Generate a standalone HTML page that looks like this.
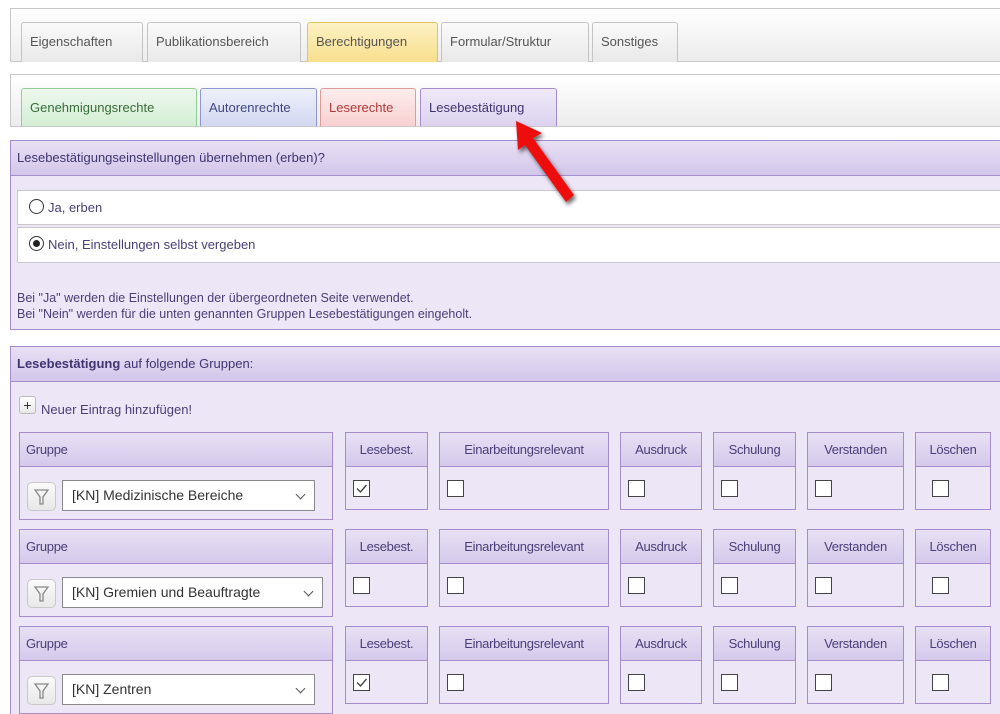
<!DOCTYPE html>
<html><head><meta charset="utf-8"><style>
*{box-sizing:border-box;margin:0;padding:0}
html,body{width:1000px;height:714px;overflow:hidden}
body{background:#fff;font-family:"Liberation Sans",Arial,sans-serif;font-size:13px;color:#4a3f78;position:relative}
.a{position:absolute}
.bar{position:absolute;left:10px;width:1000px;border:1px solid #c8c8c8;border-right:none;background:linear-gradient(#fff,#ececec)}
.tab{position:absolute;border:1px solid #c4c4c4;border-bottom:none;border-radius:3px 3px 0 0;background:linear-gradient(#fafafa,#e9e9e9);color:#555;font-size:13px;text-align:left;padding-left:8px;line-height:38px;white-space:nowrap}
.ph{position:absolute;left:10px;width:1000px;height:36px;border:1px solid #a48ccd;border-right:none;background:linear-gradient(#e8e0f4,#d3c6ea);line-height:34px;padding-left:6px;color:#3f3570}
.pb{position:absolute;left:10px;width:1000px;border:1px solid #a48ccd;border-top:none;border-right:none;background:#ede6f6}
.cell{position:absolute;border:1px solid #a48ccd;background:#ede6f6}
.ch{height:34px;border-bottom:1px solid #a48ccd;background:linear-gradient(#e8e0f4,#d5c9eb);line-height:33px;text-align:center;color:#4a3f78;font-size:13px;letter-spacing:-0.3px;white-space:nowrap}
.cb{position:absolute;width:17px;height:17px;border:1.5px solid #444;background:#fff}
.cb svg{position:absolute;left:1px;top:1px}
.flt{position:absolute;width:29px;height:29px;border:1px solid #c8c8c8;border-radius:5px;background:linear-gradient(#fafafa,#e8e8e8)}
.sel{position:absolute;height:31px;border:1px solid #8a8a8a;background:#fff;font-size:14px;color:#333;line-height:29px;padding-left:9px;white-space:nowrap}
.sel:after{content:"";position:absolute;right:10px;top:10px;width:6px;height:6px;border-right:1.2px solid #555;border-bottom:1.2px solid #555;transform:rotate(45deg)}
</style></head><body>

<div class="bar" style="top:8px;height:54px"></div>
<div class="tab" style="left:21px;top:22px;width:122px;height:40px">Eigenschaften</div>
<div class="tab" style="left:147px;top:22px;width:154px;height:40px">Publikationsbereich</div>
<div class="tab" style="left:307px;top:22px;width:131px;height:40px;background:linear-gradient(#fdf1c4,#f8df8c);border-color:#e2c45a">Berechtigungen</div>
<div class="tab" style="left:441px;top:22px;width:148px;height:40px">Formular/Struktur</div>
<div class="tab" style="left:592px;top:22px;width:86px;height:40px">Sonstiges</div>

<div class="bar" style="top:74px;height:53px"></div>
<div class="tab" style="left:21px;top:88px;width:176px;height:38px;background:linear-gradient(#eef8ee,#d3eed3);border-color:#8fcf8f;color:#3a6b3a">Genehmigungsrechte</div>
<div class="tab" style="left:200px;top:88px;width:117px;height:38px;background:linear-gradient(#eef0fb,#d3d8f1);border-color:#8e97cf;color:#3f4780">Autorenrechte</div>
<div class="tab" style="left:320px;top:88px;width:96px;height:38px;background:linear-gradient(#fdeded,#f8d0d0);border-color:#e09a9a;color:#b03a3a">Leserechte</div>
<div class="tab" style="left:420px;top:88px;width:137px;height:38px;background:linear-gradient(#efe9f8,#dcd2ef);border-color:#a48ccd;color:#3f3570">Lesebestätigung</div>

<div class="ph" style="top:140px">Lesebestätigungseinstellungen übernehmen (erben)?</div>
<div class="pb" style="top:176px;height:154px"></div>
<div class="a" style="left:17px;top:190px;width:990px;height:35px;background:#fff;border:1px solid #c8c8c8;line-height:33px;padding-left:30px;color:#4a3f78">Ja, erben</div>
<div class="a" style="left:29px;top:199px;width:15px;height:15px;border:1.3px solid #333;border-radius:50%;background:#fff"></div>
<div class="a" style="left:17px;top:227px;width:990px;height:36px;background:#fff;border:1px solid #c8c8c8;line-height:34px;padding-left:30px;color:#4a3f78">Nein, Einstellungen selbst vergeben</div>
<div class="a" style="left:29px;top:236px;width:15px;height:15px;border:1.3px solid #333;border-radius:50%;background:#fff"><div style="position:absolute;left:2.5px;top:2.5px;width:7.5px;height:7.5px;border-radius:50%;background:#222"></div></div>
<div class="a" style="left:17px;top:290px;font-size:12.5px;line-height:16px;color:#4a3f78">Bei "Ja" werden die Einstellungen der übergeordneten Seite verwendet.<br>Bei "Nein" werden für die unten genannten Gruppen Lesebestätigungen eingeholt.</div>

<div class="ph" style="top:346px"><b>Lesebestätigung</b> auf folgende Gruppen:</div>
<div class="pb" style="top:382px;height:340px"></div>
<div class="a" style="left:19px;top:396px;width:17px;height:18px;border:1px solid #bbb;border-radius:3px;background:linear-gradient(#fff,#e8e8e8);text-align:center;line-height:16px;color:#333;font-size:14px">+</div>
<div class="a" style="left:41px;top:402px;color:#4a3f78">Neuer Eintrag hinzufügen!</div>

<svg class="a" style="left:0;top:0" width="1000" height="714">
<defs><filter id="s"><feDropShadow dx="2" dy="3" stdDeviation="2" flood-color="#000" flood-opacity="0.6"/></filter></defs>
<polygon filter="url(#s)" fill="#ee1111" points="516,121 542,133 533,138 574,195 566,202 525,145 518,150"/>
</svg>

<div id="rows"></div>
<script>
var rows=[[432,"[KN] Medizinische Bereiche",true,315],[529,"[KN] Gremien und Beauftragte",false,323],[626,"[KN] Zentren",true,315]];
var cols=[[345,83,"Lesebest."],[439,170,"Einarbeitungsrelevant"],[620,82,"Ausdruck"],[713,83,"Schulung"],[807,97,"Verstanden"],[915,76,"Löschen"]];
var h="";
rows.forEach(function(r){
 var y=r[0];
 h+='<div class="cell" style="left:19px;top:'+y+'px;width:314px;height:88px"><div class="ch" style="text-align:left;padding-left:6px">Gruppe</div></div>';
 h+='<div class="flt" style="left:27px;top:'+(y+50)+'px"><svg width="27" height="27" viewBox="0 0 27 27"><path d="M7 7 H20 L15 14 V21 L12 21 V14 Z" fill="none" stroke="#888" stroke-width="1.3"/></svg></div>';
 h+='<div class="sel" style="left:62px;top:'+(y+48)+'px;width:'+(r[3]-62)+'px">'+r[1]+'</div>';
 cols.forEach(function(c,i){
  h+='<div class="cell" style="left:'+c[0]+'px;top:'+y+'px;width:'+c[1]+'px;height:78px"><div class="ch">'+c[2]+'</div></div>';
  var cx=(i==5)?c[0]+17:c[0]+8;
  h+='<div class="cb" style="left:'+cx+'px;top:'+(y+48)+'px">'+((i==0&&r[2])?'<svg width="13" height="13"><path d="M2 6.5 L5.5 10 L11.5 3" fill="none" stroke="#444" stroke-width="1.4"/></svg>':'')+'</div>';
 });
});
document.getElementById("rows").innerHTML=h;
</script>
</body></html>
